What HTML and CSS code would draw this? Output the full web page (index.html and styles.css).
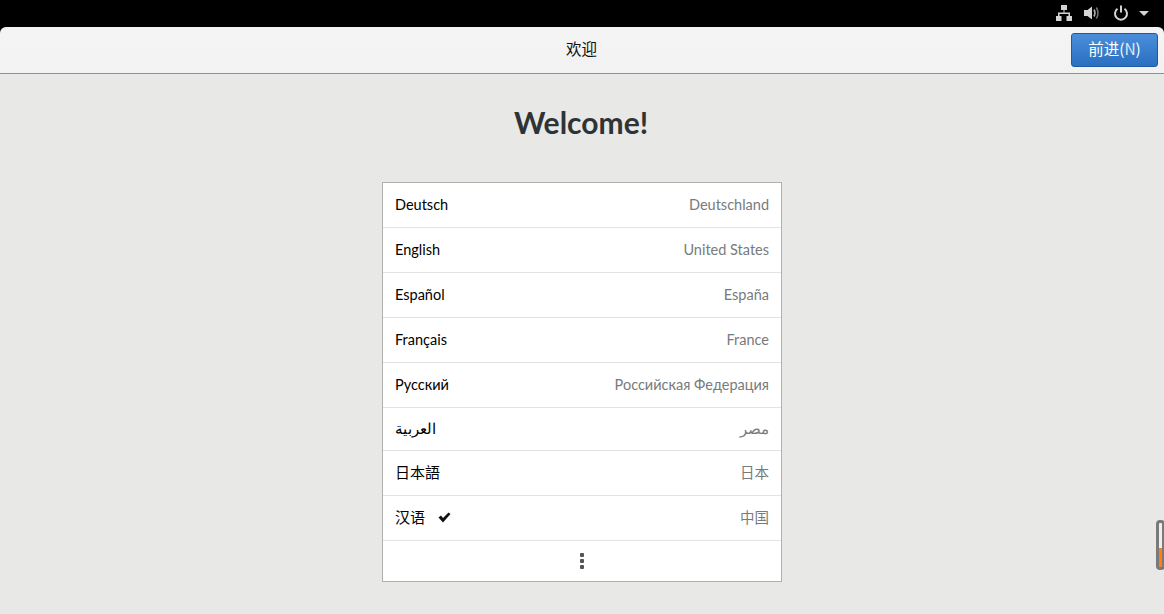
FILE: index.html
```html
<!DOCTYPE html>
<html lang="zh">
<head>
<meta charset="utf-8">
<title>欢迎</title>
<link rel="stylesheet" href="styles.css">
</head>
<body>
<div class="topbar">
  <svg class="ic" width="16" height="16" viewBox="0 0 16 16"><path fill="#d4d4d4" d="M5 0h6v5H8.500v2.500H14V11h2v5h-5.500v-5H12.500V9H3.500v2H5.500v5H0v-5h2V7.500h5.500V5H5z"/></svg>
  <svg class="ic vol" width="16" height="16" viewBox="0 0 16 16"><path fill="#d4d4d4" d="M0 5h3.500L8 1.500v13L3.500 11H0z"/><path fill="none" stroke="#a8a8a8" stroke-width="1.600" d="M10 4.500q2 3.500 0 7"/><path fill="none" stroke="#707070" stroke-width="1.600" d="M12.300 2.500q3.400 5.500 0 11"/></svg>
  <svg class="ic pw" width="16" height="16" viewBox="0 0 16 16"><path fill="none" stroke="#d4d4d4" stroke-width="2" d="M4.500 3.800a6 6 0 1 0 7 0"/><path fill="none" stroke="#d4d4d4" stroke-width="2" d="M8 0.500v7"/></svg>
  <span class="caret"></span>
</div>
<header class="header">
  <div class="title">欢迎</div>
  <button class="next">前进(<span class="mn">N</span>)</button>
</header>
<main class="main">
  <h1 class="welcome">Welcome!</h1>
  <ul class="list">
    <li class="row"><span class="lang">Deutsch</span><span class="region">Deutschland</span></li>
    <li class="row"><span class="lang">English</span><span class="region">United States</span></li>
    <li class="row"><span class="lang">Español</span><span class="region">España</span></li>
    <li class="row"><span class="lang">Français</span><span class="region">France</span></li>
    <li class="row"><span class="lang">Русский</span><span class="region">Российская Федерация</span></li>
    <li class="row short"><span class="lang">العربية</span><span class="region">مصر</span></li>
    <li class="row cjk"><span class="lang">日本語</span><span class="region">日本</span></li>
    <li class="row cjk"><span class="lang">汉语<svg class="check" width="13" height="11" viewBox="0 0 13 11"><path fill="#111" d="M0.500 5.500L3 3.500l2 2.500L10.500 0.500 12.500 2 5 10.500z"/></svg></span><span class="region">中国</span></li>
    <li class="more"><svg width="4" height="16" viewBox="0 0 4 16"><rect width="4" height="4" rx="1" fill="#555"/><rect y="6" width="4" height="4" rx="1" fill="#555"/><rect y="12" width="4" height="4" rx="1" fill="#555"/></svg></li>
  </ul>
</main>
<div class="indicator"><div class="fill"></div></div>
</body>
</html>
```
FILE: styles.css
```css
* { box-sizing: border-box; }
html, body { margin: 0; height: 100%; }
body {
  width: 1164px; height: 614px; overflow: hidden;
  display: flex; flex-direction: column;
  background: #000;
  font-family: Lato, "Noto Sans CJK SC", sans-serif;
  font-size: 15px; color: #000;
  position: relative;
}
.topbar {
  height: 27px; flex: none;
  display: flex; align-items: center; justify-content: flex-end;
  padding: 0 15px 1px 0;
}
.ic { display: block; }
.vol { margin-left: 12px; }
.pw { margin-left: 13px; }
.caret {
  margin-left: 10px; width: 0; height: 0;
  border-left: 5px solid transparent; border-right: 5px solid transparent;
  border-top: 5px solid #d4d4d4;
}
.header {
  height: 47px; flex: none;
  background: linear-gradient(#f4f4f4, #f2f2f2);
  border-radius: 6px 6px 0 0;
  border-bottom: 1px solid #8e908c;
  display: flex; align-items: center; justify-content: center;
  position: relative;
}
.title { font-size: 15.500px; color: #111; font-family: "Noto Sans CJK SC", sans-serif; margin-bottom: 5px; margin-right: 1px; }
.next {
  position: absolute; right: 6px; top: 6px;
  width: 87px; height: 34px; padding: 0 0 5px;
  background: linear-gradient(#4a8edb, #2a6fc0);
  border: 1px solid #1c5aa6; border-radius: 3px;
  color: #fff; font: 15.500px "Noto Sans CJK SC", sans-serif;
}
.mn { color: #dfe7f2; }
.main {
  flex: 1; background: #e8e8e6;
  display: flex; flex-direction: column; align-items: center;
}
.welcome {
  margin: 28px 0 0 -2px; height: 80px;
  font-size: 30px; font-weight: 700; line-height: 40px; color: #2e3436;
}
.list {
  list-style: none; margin: 0; padding: 0;
  width: 400px; height: 400px;
  background: #fff; border: 1px solid #b0b0ae;
  display: flex; flex-direction: column;
}
.row {
  height: 45px; flex: none; padding: 0 12px 1px;
  display: flex; align-items: center; justify-content: space-between;
  border-bottom: 1px solid #e2e2e0;
}
.short { height: 43px; padding-bottom: 1px; }
.cjk { padding-bottom: 4px; }
.lang { display: flex; align-items: center; font-size: 14.500px; }
.region { color: #777b7c; font-size: 14.500px; }
.cjk .lang { font-size: 15px; }
.check { margin: 3px 0 0 13px; }
.more { flex: 1; display: flex; align-items: center; justify-content: center; }
.indicator {
  position: absolute; left: 1156px; top: 520px;
  width: 9px; height: 50px;
  border: 3px solid #7a7a7a; border-radius: 4px;
  background: #eee; display: flex; align-items: flex-end;
}
.fill { width: 100%; height: 19px; background: #ff7f17; }
```
